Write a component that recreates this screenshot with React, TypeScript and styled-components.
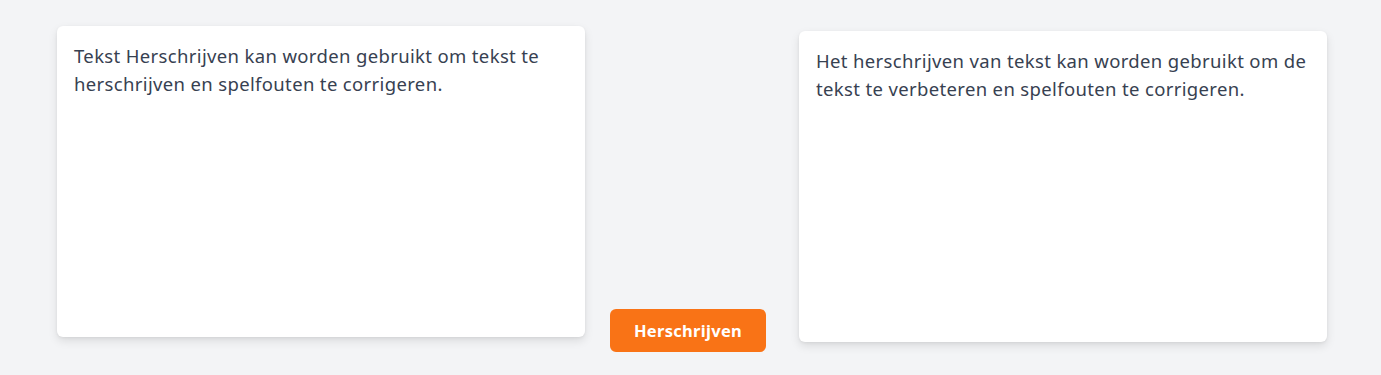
import React from 'react';
import styled, { createGlobalStyle } from 'styled-components';

const GlobalStyle = createGlobalStyle`
  html, body {
    margin: 0;
    padding: 0;
    background: #f3f4f6;
    font-family: 'Noto Sans', 'Open Sans', sans-serif;
  }
`;

const Page = styled.div`
  display: flex;
  align-items: flex-start;
  padding: 0 54px 0 57px;
  height: 375px;
  box-sizing: border-box;
`;

const Card = styled.div<{ $top: number }>`
  width: 528px;
  height: 311px;
  margin-top: ${p => p.$top}px;
  box-sizing: border-box;
  padding: 16px 17px;
  background: #ffffff;
  border-radius: 6px;
  box-shadow: 0 4px 10px rgba(0, 0, 0, 0.1), 0 1px 3px rgba(0, 0, 0, 0.06);
  color: #374151;
  font-size: 18.5px;
  letter-spacing: 0.35px;
  line-height: 28px;
`;

const Action = styled.button`
  margin: 309px 33px 0 25px;
  width: 156px;
  height: 43px;
  border: none;
  border-radius: 6px;
  background: #f97316;
  color: #ffffff;
  font-family: 'Noto Sans', 'Open Sans', sans-serif;
  font-weight: 700;
  font-size: 16.5px;
  letter-spacing: 0.3px;
  cursor: pointer;
`;

export default function App() {
  return (
    <>
      <GlobalStyle />
      <Page>
        <Card $top={26}>
          Tekst Herschrijven kan worden gebruikt om tekst te herschrijven en spelfouten te corrigeren.
        </Card>
        <Action>Herschrijven</Action>
        <Card $top={31}>
          Het herschrijven van tekst kan worden gebruikt om de tekst te verbeteren en spelfouten te corrigeren.
        </Card>
      </Page>
    </>
  );
}
